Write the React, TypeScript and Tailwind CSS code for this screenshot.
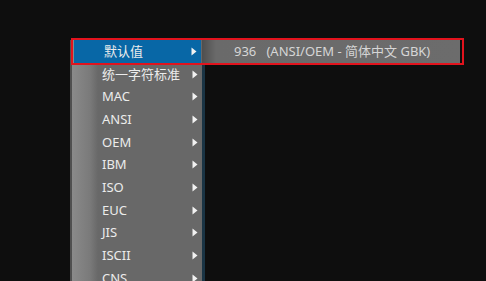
import type { ReactNode } from "react";

const items = ["默认值", "统一字符标准", "MAC", "ANSI", "OEM", "IBM", "ISO", "EUC", "JIS", "ISCII", "CNS"];

function Arrow() {
  return (
    <svg width="6" height="9" viewBox="0 0 6 9" className="shrink-0" aria-hidden>
      <path d="M0.5 0.5 L5.5 4.5 L0.5 8.5 Z" fill="#f2f2f2" />
    </svg>
  );
}

function Row({ label, active, children }: { label: string; active?: boolean; children?: ReactNode }) {
  return (
    <div
      className={`flex h-[22.7px] items-center justify-between pl-[30px] pr-[4px] ${
        active ? "ml-[2px] mr-[1px] bg-[#0867a6] pl-[28px]" : ""
      }`}
    >
      <span className="text-[13px] leading-none text-[#ececec]">{label}</span>
      <Arrow />
      {children}
    </div>
  );
}

export default function App() {
  return (
    <div
      className="relative h-[281px] w-[486px] overflow-hidden bg-[#0e0e0e]"
      style={{ fontFamily: '"Noto Sans", "Noto Sans CJK SC", sans-serif' }}
    >
      <div className="flex pl-[70px] pt-[40px]">
        <div className="flex h-[260px] w-[132px] border-l-2 border-[#505050] bg-[#686868]">
          <div className="flex w-full flex-col bg-[linear-gradient(to_right,#8a8a8a_0px,#7a7a7a_18px,#686868_26px,#686868_100%)]">
            {items.map((it, i) => (
              <Row key={it} label={it} active={i === 0} />
            ))}
          </div>
        </div>
        <div className="flex flex-col">
          <div className="flex h-[22.7px] w-[258px] items-center bg-[linear-gradient(to_right,#4e4e4e_0px,#6a6a6a_14px,#6c6c6c_100%)] pl-[32px]">
            <span className="whitespace-pre text-[13px] leading-none text-[#d6d6d6]">
              936   (ANSI/OEM - 简体中文 GBK)
            </span>
          </div>
          <div className="h-[238px] w-[3px] bg-[#1a3444]" />
        </div>
      </div>
      <div className="pointer-events-none absolute left-[71px] top-[38px] h-[27px] w-[393px] border-2 border-[#e2131d]" />
    </div>
  );
}
